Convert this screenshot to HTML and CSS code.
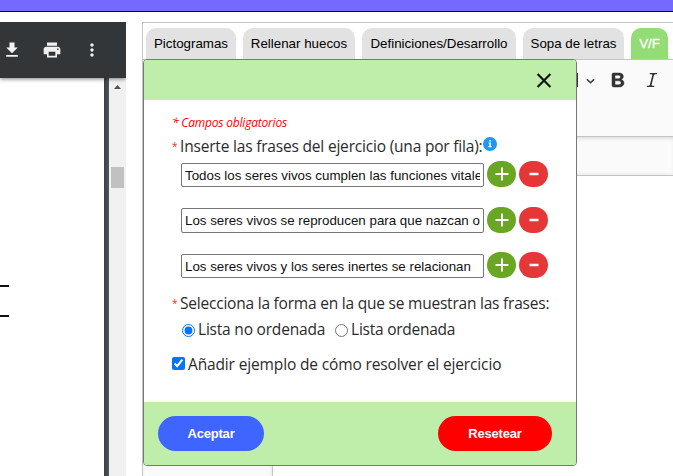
FILE: index.html
```html
<!DOCTYPE html>
<html lang="es">
<head>
<meta charset="utf-8">
<title>Ejercicio V/F</title>
<link rel="stylesheet" href="styles.css">
</head>
<body>
<header class="topbar"></header>
<main class="workspace">
  <section class="viewer">
    <div class="viewer-bar">
      <svg class="vicon" viewBox="0 0 24 24"><path d="M19 9h-4V3H9v6H5l7 7 7-7zM5 18v2h14v-2H5z"/></svg>
      <svg class="vicon" viewBox="0 0 24 24"><path d="M19 8H5c-1.660 0-3 1.340-3 3v6h4v4h12v-4h4v-6c0-1.660-1.340-3-3-3zm-3 11H8v-5h8v5zm3-7c-.55 0-1-.45-1-1s.45-1 1-1 1 .45 1 1-.45 1-1 1zm-1-9H6v4h12V3z"/></svg>
      <svg class="vicon" viewBox="0 0 24 24"><path d="M12 8c1.100 0 2-.9 2-2s-.9-2-2-2-2 .9-2 2 .9 2 2 2zm0 2c-1.100 0-2 .9-2 2s.9 2 2 2 2-.9 2-2-.9-2-2-2zm0 6c-1.100 0-2 .9-2 2s.9 2 2 2 2-.9 2-2-.9-2-2-2z"/></svg>
    </div>
    <div class="viewer-body">
      <div class="sheet"><hr class="rule"><hr class="rule"></div>
      <div class="scroll">
        <svg class="up" viewBox="0 0 7 4"><path d="M3.500 0L7 4H0z"/></svg>
        <div class="thumb"></div>
      </div>
    </div>
  </section>
  <section class="panel">
    <nav class="tabs">
      <button class="tab t1">Pictogramas</button>
      <button class="tab t2">Rellenar huecos</button>
      <button class="tab t3">Definiciones/Desarrollo</button>
      <button class="tab t4">Sopa de letras</button>
      <button class="tab t5 active">V/F</button>
    </nav>
    <div class="editor-bar">
      <svg class="chev" viewBox="0 0 10 6"><path d="M1 1l4 4 4-4"/></svg>
      <svg class="bold" viewBox="0 0 20 20"><path d="M10.187 17H5.773c-.637 0-1.092-.138-1.364-.415-.273-.277-.409-.718-.409-1.323V4.738c0-.617.14-1.062.419-1.332.279-.27.730-.406 1.354-.406h4.680c.69 0 1.288.041 1.793.124.506.083.960.242 1.360.477.341.197.644.447.906.750a3.262 3.262 0 0 1 .808 2.162c0 1.401-.722 2.426-2.167 3.075C15.050 10.175 16 11.315 16 13.010a3.756 3.756 0 0 1-2.296 3.504 6.100 6.100 0 0 1-1.517.377c-.571.073-1.238.110-2 .110zm-.217-6.217H7v4.087h3.069c1.977 0 2.965-.69 2.965-2.072 0-.707-.256-1.220-.768-1.537-.512-.319-1.277-.478-2.296-.478zM7 5.130v3.619h2.606c.729 0 1.292-.067 1.690-.2a1.600 1.600 0 0 0 .910-.765c.165-.267.247-.566.247-.897 0-.707-.260-1.176-.778-1.409-.519-.232-1.310-.348-2.375-.348H7z"/></svg>
      <svg class="italic" viewBox="0 0 20 20"><path d="M9.586 14.633l.021.004c-.036.335.095.655.393.962.082.083.173.150.274.201h1.474a.600.600 0 1 1 0 1.200H5.304a.600.600 0 0 1 0-1.200h1.150c.474-.070.809-.182 1.005-.334.157-.122.291-.320.404-.597l2.416-9.550a1.053 1.053 0 0 0-.281-.823 1.120 1.120 0 0 0-.442-.296H8.150a.600.600 0 0 1 0-1.200h6.443a.600.600 0 1 1 0 1.200h-1.195c-.376.056-.650.155-.823.296-.215.175-.423.439-.623.790l-2.366 9.347z"/></svg>
    </div>
    <div class="canvas"><div class="doc"></div></div>
  </section>
</main>
<div class="dialog" role="dialog">
  <div class="dialog-head">
    <svg class="close" viewBox="0 0 14 14"><path d="M1 1l12 12M13 1L1 13"/></svg>
  </div>
  <div class="dialog-body">
    <p class="required">* Campos obligatorios</p>
    <div class="line first"><span class="star">*</span><span class="label l1">Inserte las frases del ejercicio (una por fila):</span><svg class="info" viewBox="0 0 14 14"><circle cx="7" cy="7" r="7"/><path d="M6.200 3h1.700v1.500H6.200zM5.500 5.500h2.400v3.600h.8v1.100H5.400V9.100h.8V6.600h-.7z"/></svg></div>
    <div class="phrases">
      <div class="phrase"><input class="p1" value="Todos los seres vivos cumplen las funciones vitales"><button class="round add"><svg viewBox="0 0 14 14"><path d="M7 .5v13M.5 7h13"/></svg></button><button class="round del"><svg viewBox="0 0 14 14"><path d="M2.500 7h9"/></svg></button></div>
      <div class="phrase"><input class="p2" value="Los seres vivos se reproducen para que nazcan otros"><button class="round add"><svg viewBox="0 0 14 14"><path d="M7 .5v13M.5 7h13"/></svg></button><button class="round del"><svg viewBox="0 0 14 14"><path d="M2.500 7h9"/></svg></button></div>
      <div class="phrase"><input class="p3" value="Los seres vivos y los seres inertes se relacionan"><button class="round add"><svg viewBox="0 0 14 14"><path d="M7 .5v13M.5 7h13"/></svg></button><button class="round del"><svg viewBox="0 0 14 14"><path d="M2.500 7h9"/></svg></button></div>
    </div>
    <div class="line second"><span class="star">*</span><span class="label l2">Selecciona la forma en la que se muestran las frases:</span></div>
    <div class="options">
      <input type="radio" name="order" checked><span class="label l3">Lista no ordenada</span>
      <input type="radio" name="order" class="r2"><span class="label l4">Lista ordenada</span>
    </div>
    <div class="example"><input type="checkbox" checked><span class="label l5">Añadir ejemplo de cómo resolver el ejercicio</span></div>
  </div>
  <div class="dialog-foot">
    <button class="action accept">Aceptar</button>
    <button class="action reset">Resetear</button>
  </div>
</div>
</body>
</html>
```
FILE: styles.css
```css
* { box-sizing: border-box; }
body { margin: 0; width: 673px; height: 476px; overflow: hidden; background: #fff; font-family: "Liberation Sans", Arial, sans-serif; }
button { border: 0; padding: 0; font-family: inherit; white-space: nowrap; }
.topbar { height: 12px; background: #7569ff; border-bottom: 1px solid #000; }
.workspace { display: flex; height: 464px; padding-top: 10px; }
.viewer { width: 126px; display: flex; flex-direction: column; overflow: hidden; }
.viewer-bar { height: 56px; flex: none; background: #323639; display: flex; align-items: center; gap: 20px; padding-left: 2px; box-shadow: 0 1px 4px rgba(0,0,0,.5); z-index: 1; }
.vicon { width: 20px; height: 20px; fill: #f1f1f1; flex: none; }
.viewer-body { display: flex; flex: 1; background: linear-gradient(90deg, #3a3f43 104px, #50565b 109px); }
.sheet { width: 104px; background: #fff; padding-top: 207px; }
.rule { width: 9px; height: 2px; margin: 0 0 28px; border: 0; background: #111; }
.scroll { margin-left: 5px; width: 17px; background: #f1f1f1; display: flex; flex-direction: column; align-items: center; padding-top: 7px; }
.up { width: 7px; height: 4px; fill: #505050; }
.thumb { width: 13px; height: 21px; margin-top: 78px; background: #c1c1c1; }
.panel { margin-left: 16px; width: 531px; border: solid #c4c4c4; border-width: 1px 0 0 1px; display: flex; flex-direction: column; }
.tabs { display: flex; gap: 7px; padding: 5px 0 0 3px; height: 36px; flex: none; }
.tab { height: 32px; background: #e2e2e2; border-radius: 10px 10px 0 0; font-size: 13.33px; color: #000; padding-bottom: 1px; flex: none; }
.t1 { width: 90px; } .t2 { width: 112px; } .t3 { width: 154px; } .t4 { width: 101px; } .t5 { width: 37px; }
.tab.active { background: #93dc76; color: #fff; -webkit-text-stroke: .3px #fff; }
.editor-bar { height: 78px; flex: none; background: #fafafa; border: solid #c4c4c4; border-width: 1px 0; display: flex; align-items: flex-start; padding: 10px 0 0 432px; }
.editor-bar::before { content: ""; width: 3px; height: 14px; margin-top: 3px; background: #333; }
.chev { width: 9px; height: 6px; margin: 8px 0 0 8px; fill: none; stroke: #333; stroke-width: 1.6; }
.bold, .italic { width: 20px; height: 20px; fill: #333; }
.bold { margin-left: 13px; stroke: #333; stroke-width: .5; }
.italic { margin-left: 14px; }
.canvas { flex: 1; background: #fafafa; padding: 38px 0 0 129px; box-shadow: inset 0 3px 4px -2px rgba(0,0,0,.15); }
.doc { height: 100%; background: #fff; border: solid #c4c4c4; border-width: 1px 0 0 1px; box-shadow: 0 0 4px rgba(0,0,0,.12); }
.dialog { position: absolute; z-index: 5; left: 143px; top: 59px; width: 434px; height: 407px; border: 1px solid #777; border-radius: 4px; background: #fff; overflow: hidden; display: flex; flex-direction: column; }
.dialog-head { height: 40px; background: #bfeeaa; flex: none; display: flex; justify-content: flex-end; padding: 13px 24px 0 0; }
.close { width: 16px; height: 15px; fill: none; stroke: #111; stroke-width: 2; }
.dialog-body { flex: 1; padding: 14px 0 0 28px; }
.required { margin: 0; height: 18px; line-height: 18px; font-size: 12px; font-style: italic; color: #f00; font-family: "Open Sans", sans-serif; letter-spacing: -.2px; }
.line { display: flex; height: 26px; line-height: 26px; }
.star { width: 8px; font-family: "Open Sans", sans-serif; font-size: 10px; color: #f22; }
.label { white-space: nowrap; font-family: "Open Sans", sans-serif; font-size: 15.5px; color: #2b2b2b; }
.l1 { letter-spacing: -.19px; }
.l2 { letter-spacing: -.215px; }
.l3 { letter-spacing: -.2px; }
.l4 { letter-spacing: -.25px; }
.l5 { letter-spacing: -.14px; }
.first { margin-top: 1px; }
.info { width: 14px; height: 14px; margin-top: 4px; fill: #2196f3; }
.info path { fill: #e8f4ff; }
.phrases { padding-left: 9px; margin-top: 2px; display: flex; flex-direction: column; gap: 19.5px; }
.phrase { display: flex; align-items: center; height: 26px; }
.phrase input { width: 303px; height: 24px; border: 1px solid #767676; border-radius: 2px; padding: 1px 3px 0; font: 13.33px "Liberation Sans", Arial, sans-serif; color: #111; margin-right: 3px; }
.phrase .p1 { margin-top: 2px; }
.phrase .p2 { height: 25px; margin-top: 1px; }
.phrase .p3 { margin-top: 1px; }
.round { width: 29px; height: 26px; border-radius: 13px; display: flex; align-items: center; justify-content: center; }
.round svg { width: 14px; height: 14px; fill: none; stroke: #fff; stroke-width: 2; }
.del svg { stroke-width: 2.3; }
.add { background: #68a624; margin-right: 3px; }
.del { background: #e53638; }
.second { margin-top: 12px; }
.options { display: flex; align-items: center; height: 26px; padding-left: 10px; }
.options input, .example input { width: 13px; height: 13px; margin: 0 3px 0 0; flex: none; }
.options input { margin-top: 2px; }
.options .r2 { margin-left: 10px; }
.example { display: flex; align-items: center; height: 26px; margin-top: 9px; }
.example input { margin-top: -1px; }
.dialog-foot { height: 63px; flex: none; background: #bfeeaa; display: flex; justify-content: space-between; padding: 14px 24px 0 14px; }
.action { height: 35px; border-radius: 18px; color: #fff; font-weight: bold; font-size: 13px; letter-spacing: -.2px; }
.accept { width: 106px; background: #3e65ff; }
.reset { width: 114px; background: #f00; }
```
